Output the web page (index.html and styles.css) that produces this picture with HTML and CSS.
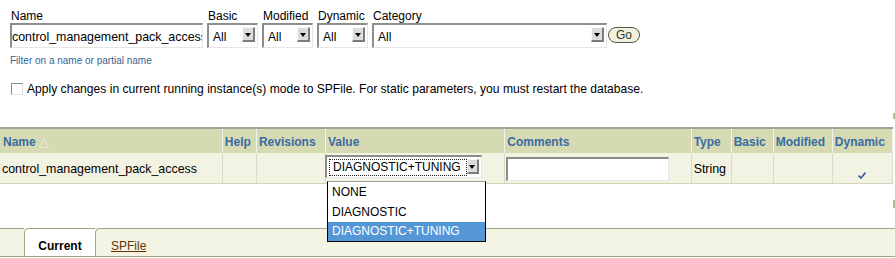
FILE: index.html
```html
<!DOCTYPE html>
<html lang="en">
<head>
  <meta charset="utf-8">
  <title>Initialization Parameters</title>
  <link rel="stylesheet" href="styles.css">
</head>
<body>
<form class="search" onsubmit="return false">
  <div class="filters">
    <div class="field">
      <label>Name</label>
      <input class="textbox name-box" type="text" value="control_management_pack_access">
    </div>
    <div class="field">
      <label>Basic</label>
      <div class="select small"><span class="select-text">All</span><span class="arrow"></span></div>
    </div>
    <div class="field">
      <label>Modified</label>
      <div class="select small"><span class="select-text">All</span><span class="arrow"></span></div>
    </div>
    <div class="field">
      <label>Dynamic</label>
      <div class="select small"><span class="select-text">All</span><span class="arrow"></span></div>
    </div>
    <div class="field">
      <label>Category</label>
      <div class="select category"><span class="select-text">All</span><span class="arrow"></span></div>
    </div>
    <button class="go" type="submit">Go</button>
  </div>
  <div class="hint">Filter on a name or partial name</div>
  <div class="apply">
    <span class="checkbox"></span>
    <span>Apply changes in current running instance(s) mode to SPFile. For static parameters, you must restart the database.</span>
  </div>
</form>

<div class="edge-row"><span class="edge-mark"></span></div>

<table class="params">
  <colgroup>
    <col class="c-name">
    <col class="c-help">
    <col class="c-rev">
    <col class="c-value">
    <col class="c-comments">
    <col class="c-type">
    <col class="c-basic">
    <col class="c-modified">
    <col class="c-dynamic">
  </colgroup>
  <thead>
  <tr>
    <th>Name <span class="sort">&#9651;</span></th>
    <th>Help</th>
    <th>Revisions</th>
    <th>Value</th>
    <th>Comments</th>
    <th>Type</th>
    <th>Basic</th>
    <th>Modified</th>
    <th>Dynamic</th>
  </tr>
  </thead>
  <tbody>
  <tr>
    <td>control_management_pack_access</td>
    <td></td>
    <td></td>
    <td class="value-cell">
      <div class="select value-select">
        <span class="select-text"><span class="focus">DIAGNOSTIC+TUNING</span></span><span class="arrow"></span>
        <ul class="listbox">
          <li>NONE</li>
          <li>DIAGNOSTIC</li>
          <li class="selected">DIAGNOSTIC+TUNING</li>
        </ul>
      </div>
    </td>
    <td class="comment-cell"><input class="textbox comment-box" type="text" value=""></td>
    <td>String</td>
    <td></td>
    <td></td>
    <td class="check-cell">
      <svg class="check" width="8" height="7" viewBox="0 0 8 7"><path d="M0.5 3.5 L3 6 L7.5 0.5" fill="none" stroke="#2f5f98" stroke-width="1.6"/></svg>
    </td>
  </tr>
  </tbody>
</table>

<div class="edge-row low"><span class="edge-mark"></span></div>

<div class="tabs">
  <span class="tab stub"></span>
  <span class="tab current">Current</span>
  <span class="tab rest"><a href="#">SPFile</a></span>
</div>
</body>
</html>
```

FILE: styles.css
```css
body {
    margin: 0;
    width: 895px;
    font-family: 'Liberation Sans', Arial, Helvetica, sans-serif;
    font-size: 12px;
    color: #000;
    background-color: #fff;
}

/* search form */
.filters {
    display: flex;
    align-items: flex-end;
    padding: 9px 0 0 10px;
}

.field {
    display: flex;
    flex-direction: column;
    margin-right: 4px;
}

.field label {
    line-height: 15px;
    margin-bottom: -1px;
    padding-left: 1px;
}

.textbox,
.select {
    box-sizing: border-box;
    height: 25px;
    border-style: solid;
    border-width: 2px 1px 1px 2px;
    border-color: #8c8c8c #e6e6e6 #e6e6e6 #8c8c8c;
    background: #fff;
}

.textbox {
    font-family: inherit;
    font-size: 12.4px;
    padding: 1px 0 0 0;
    margin: 0;
    outline: none;
}

.name-box {
    width: 193px;
}

.select {
    display: flex;
    justify-content: space-between;
    position: relative;
}

.select.small {
    width: 51px;
}

.select.category {
    width: 235px;
}

.select-text {
    line-height: 22px;
    padding: 1px 0 0 4px;
}

.arrow {
    box-sizing: border-box;
    width: 13px;
    height: 15px;
    margin: 2px 2px 0 0;
    background: #dcdcdc;
    border-style: solid;
    border-width: 1px 2px 2px 1px;
    border-color: #f8f8f8 #7c7c7c #7c7c7c #f8f8f8;
    display: flex;
    align-items: center;
    justify-content: center;
}

.arrow::after {
    content: '';
    border-left: 3px solid transparent;
    border-right: 3px solid transparent;
    border-top: 4px solid #000;
    margin-top: 1px;
}

.go {
    box-sizing: border-box;
    width: 32px;
    height: 16px;
    margin: 0 0 5px -3px;
    padding: 0;
    border: 1px solid #55554a;
    border-radius: 8px;
    background: #f1f1dc;
    font-family: inherit;
    font-size: 12px;
    line-height: 12px;
    color: #333;
}

.hint {
    margin: 7px 0 0 10px;
    font-size: 10px;
    line-height: 12px;
    color: #336699;
}

.apply {
    display: flex;
    align-items: center;
    margin: 14px 0 0 11px;
    height: 16px;
    font-size: 12.1px;
}

.checkbox {
    box-sizing: border-box;
    width: 12px;
    height: 12px;
    margin-right: 4px;
    border-style: solid;
    border-width: 1px;
    border-color: #8a8a8a #e2e2e2 #e2e2e2 #8a8a8a;
    background: #fff;
}

/* the cut-off bits at the right edge */
.edge-row {
    height: 30px;
    display: flex;
    justify-content: flex-end;
    padding-top: 16px;
    box-sizing: border-box;
}

.edge-row.low {
    height: 44px;
}

.edge-mark {
    width: 2px;
    height: 6px;
    background: #b9b98e;
}

.edge-row.low .edge-mark {
    height: 8px;
}

/* parameter table */
.params {
    border-collapse: collapse;
    table-layout: fixed;
    width: 893px;
    border-top: 2px solid #a3a394;
}

.c-name { width: 222px; }
.c-help { width: 34px; }
.c-rev { width: 69px; }
.c-value { width: 179px; }
.c-comments { width: 186px; }
.c-type { width: 40px; }
.c-basic { width: 42px; }
.c-modified { width: 59px; }
.c-dynamic { width: 60px; }

.params th {
    height: 23px;
    padding: 1px 2px 0;
    background: #d5dab2;
    color: #3a6ba3;
    font-weight: bold;
    text-align: left;
    white-space: nowrap;
    border-right: 1px solid #f3f3e8;
}

.params th:first-child {
    padding-left: 3px;
}

.sort {
    color: #eef0dc;
    font-weight: normal;
    font-size: 13px;
}

.params td {
    height: 28px;
    padding: 1px 2px 0;
    background: #f3f3e3;
    border-right: 1px solid #dcdcc4;
    border-bottom: 1px solid #d3d3b5;
    white-space: nowrap;
    font-size: 12.4px;
}

.params td.value-cell {
    padding: 0;
    vertical-align: top;
    padding-top: 2px;
}

.value-select {
    width: 157px;
    height: 23px;
    margin-left: -1px;
    font-size: 12px;
}

.value-select .select-text {
    padding: 0 0 0 2px;
    line-height: 17px;
}

.focus {
    display: inline-block;
    padding: 1px 6px 1px 4px;
    margin-top: 2px;
    outline: 1px dotted #222;
    outline-offset: -1px;
    line-height: 15px;
}

.listbox {
    position: absolute;
    top: 24px;
    left: 0;
    width: 157px;
    margin: 0;
    padding: 0;
    list-style: none;
    background: #fff;
    border: 1px solid #000;
    border-top-color: #9a9a9a;
    z-index: 2;
}

.listbox li {
    height: 20px;
    line-height: 20px;
    padding-left: 4px;
}

.listbox li.selected {
    height: 19px;
    line-height: 19px;
    background: #5596d6;
    color: #fff;
}

.params td.comment-cell {
    padding-left: 1px;
}

.comment-box {
    width: 163px;
    height: 24px;
    margin-top: 1px;
}

.check-cell {
    text-align: center;
    vertical-align: bottom;
}

.check {
    display: block;
    margin: 0 auto 4px;
}

/* sub tabs */
.tabs {
    display: flex;
    height: 28px;
    background: #f4f4e5;
    border-bottom: 1px solid #a3a382;
}

.tab {
    box-sizing: border-box;
    border-top: 1px solid #a3a382;
    border-left: 1px solid #a3a382;
    border-top-left-radius: 5px;
    padding-top: 10px;
}

.tab.stub {
    width: 24px;
    border-left: none;
    border-top-left-radius: 0;
}

.tab.current {
    width: 71px;
    background: #fff;
    font-weight: bold;
    text-align: center;
}

.tab.rest {
    flex: 1;
    padding-left: 15px;
}

.tab a {
    color: #663300;
}
```
